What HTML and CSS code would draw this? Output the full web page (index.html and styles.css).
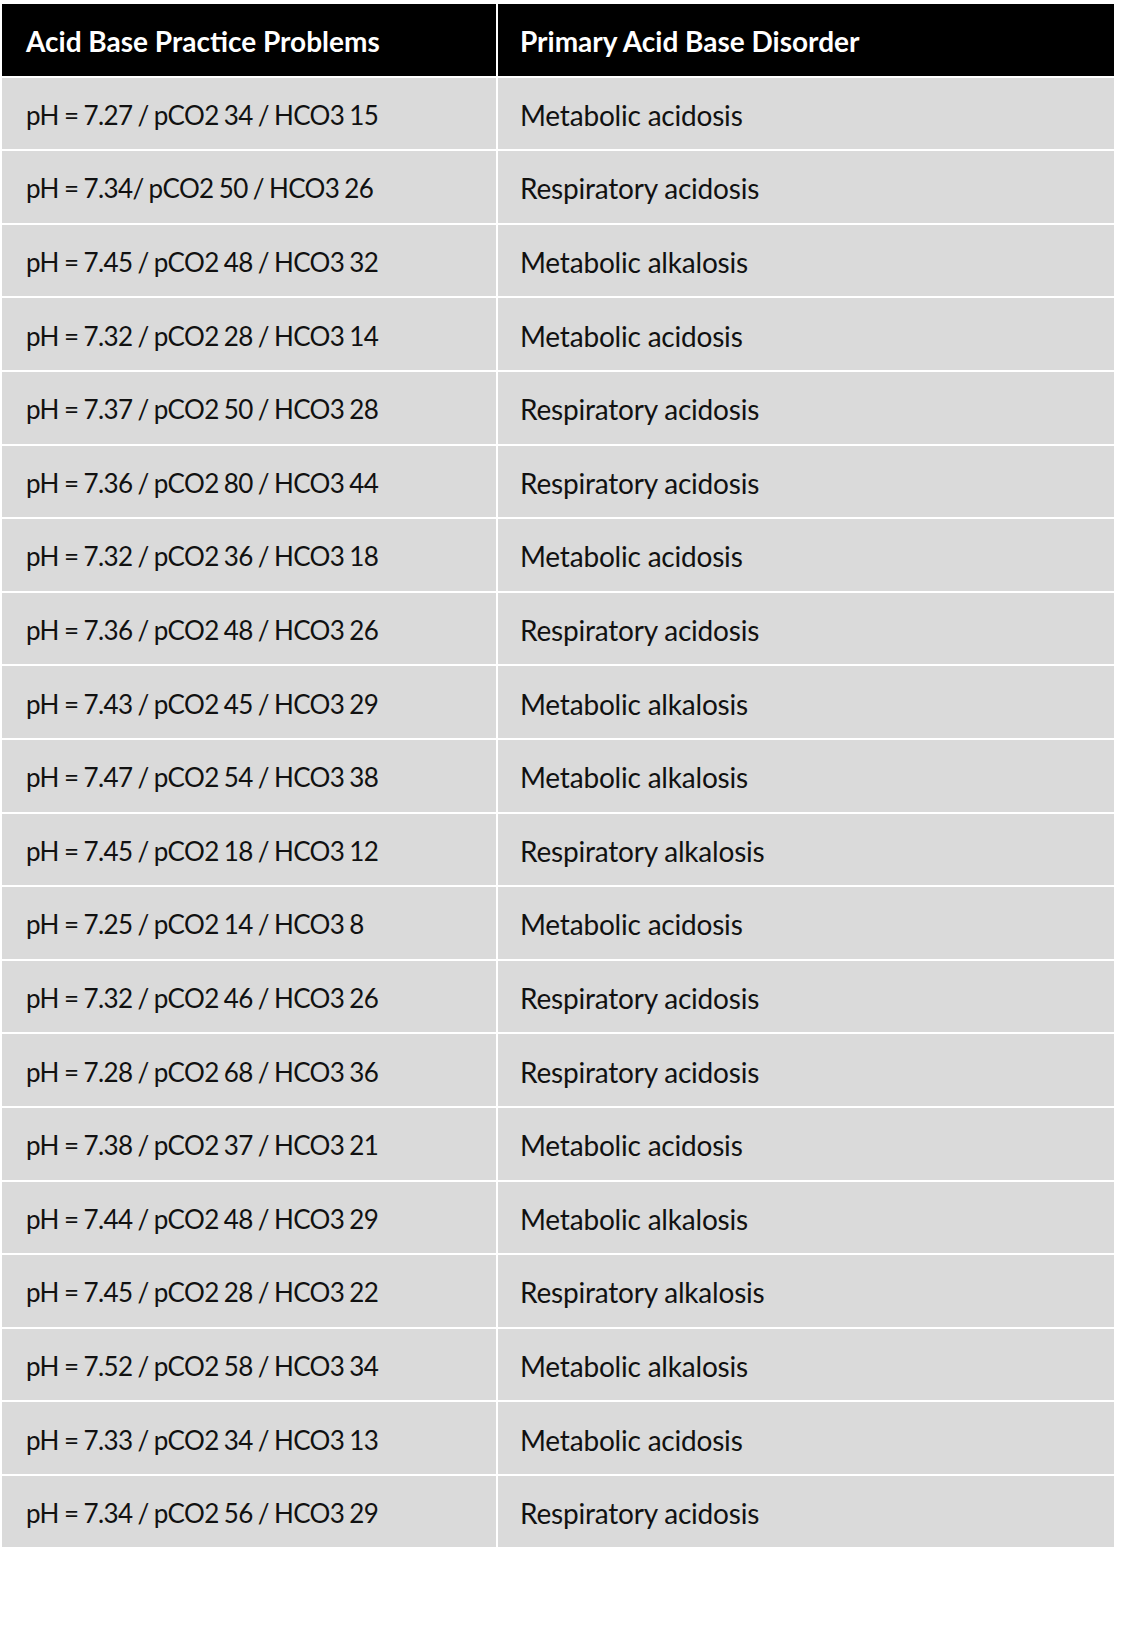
FILE: index.html
```html
<!DOCTYPE html>
<html lang="en">
<head>
<meta charset="utf-8">
<title>Acid Base Practice Problems</title>
<link rel="stylesheet" href="styles.css">
</head>
<body>
<table class="ab-table">
  <thead>
    <tr><th class="col-problem">Acid Base Practice Problems</th><th class="col-answer">Primary Acid Base Disorder</th></tr>
  </thead>
  <tbody>
    <tr><td>pH = 7.27 / pCO2 34 / HCO3 15</td><td>Metabolic acidosis</td></tr>
    <tr><td>pH = 7.34/ pCO2 50 / HCO3 26</td><td>Respiratory acidosis</td></tr>
    <tr><td>pH = 7.45 / pCO2 48 / HCO3 32</td><td>Metabolic alkalosis</td></tr>
    <tr><td>pH = 7.32 / pCO2 28 / HCO3 14</td><td>Metabolic acidosis</td></tr>
    <tr><td>pH = 7.37 / pCO2 50 / HCO3 28</td><td>Respiratory acidosis</td></tr>
    <tr><td>pH = 7.36 / pCO2 80 / HCO3 44</td><td>Respiratory acidosis</td></tr>
    <tr><td>pH = 7.32 / pCO2 36 / HCO3 18</td><td>Metabolic acidosis</td></tr>
    <tr><td>pH = 7.36 / pCO2 48 / HCO3 26</td><td>Respiratory acidosis</td></tr>
    <tr><td>pH = 7.43 / pCO2 45 / HCO3 29</td><td>Metabolic alkalosis</td></tr>
    <tr><td>pH = 7.47 / pCO2 54 / HCO3 38</td><td>Metabolic alkalosis</td></tr>
    <tr><td>pH = 7.45 / pCO2 18 / HCO3 12</td><td>Respiratory alkalosis</td></tr>
    <tr><td>pH = 7.25 / pCO2 14 / HCO3 8</td><td>Metabolic acidosis</td></tr>
    <tr><td>pH = 7.32 / pCO2 46 / HCO3 26</td><td>Respiratory acidosis</td></tr>
    <tr><td>pH = 7.28 / pCO2 68 / HCO3 36</td><td>Respiratory acidosis</td></tr>
    <tr><td>pH = 7.38 / pCO2 37 / HCO3 21</td><td>Metabolic acidosis</td></tr>
    <tr><td>pH = 7.44 / pCO2 48 / HCO3 29</td><td>Metabolic alkalosis</td></tr>
    <tr><td>pH = 7.45 / pCO2 28 / HCO3 22</td><td>Respiratory alkalosis</td></tr>
    <tr><td>pH = 7.52 / pCO2 58 / HCO3 34</td><td>Metabolic alkalosis</td></tr>
    <tr><td>pH = 7.33 / pCO2 34 / HCO3 13</td><td>Metabolic acidosis</td></tr>
    <tr><td>pH = 7.34 / pCO2 56 / HCO3 29</td><td>Respiratory acidosis</td></tr>
  </tbody>
</table>
</body>
</html>
```
FILE: styles.css
```css
html, body {
  margin: 0;
  padding: 0;
  background: #ffffff;
}

body {
  font-family: Lato, "Open Sans", sans-serif;
  color: #111111;
}

.ab-table {
  margin-top: 2px;
  border-collapse: separate;
  border-spacing: 2px;
  table-layout: fixed;
  width: 1116px;
}

.ab-table th,
.ab-table td {
  height: 71.6px;
  padding: 3px 0 0 24px;
  text-align: left;
  vertical-align: middle;
  box-sizing: border-box;
  white-space: nowrap;
}

.ab-table th + th,
.ab-table td + td {
  padding-left: 22px;
}

.col-problem { width: 494px; }
.col-answer { width: 616px; }

.ab-table th {
  background: #000000;
  color: #ffffff;
  font-weight: 700;
  font-size: 28px;
  letter-spacing: 0;
}

.ab-table td {
  background: #dadada;
  font-weight: 400;
  font-size: 28px;
  letter-spacing: -0.2px;
}

.ab-table td:first-child {
  font-size: 26px;
  letter-spacing: -0.6px;
  word-spacing: -1px;
}
```
